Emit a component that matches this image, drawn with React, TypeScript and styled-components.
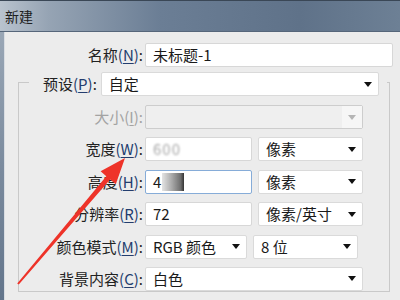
import React from 'react';
import styled, { createGlobalStyle } from 'styled-components';

const GlobalStyle = createGlobalStyle`
  html, body {
    margin: 0;
    padding: 0;
    background: #ececec;
  }
  * {
    box-sizing: border-box;
  }
`;

const Window = styled.div`
  width: 400px;
  height: 300px;
  overflow: hidden;
  display: flex;
  flex-direction: column;
  position: relative;
  font-family: "Noto Sans CJK SC", "Noto Sans", sans-serif;
  color: #1c1c1c;
`;

const TitleBar = styled.div`
  height: 32px;
  flex-shrink: 0;
  display: flex;
  align-items: center;
  padding-left: 5px;
  border-top: 1px solid #3a4756;
  border-bottom: 1px solid #56667a;
  background: linear-gradient(90deg, #b9c3ce 0%, #96a4b4 12%, #6b7e95 40%, #5f7289 75%, #6d8095 100%);
  font-size: 14px;
  line-height: 16px;
  color: #202020;
`;

const Body = styled.div`
  flex: 1;
  display: flex;
`;

const FrameEdge = styled.div`
  width: 5px;
  flex-shrink: 0;
  background: linear-gradient(180deg, #9aa7b6 0%, #7b8b9e 50%, #63758b 100%);
  border-right: 1px solid #d9dde2;
`;

const Content = styled.div`
  flex: 1;
  background: #ececec;
  padding: 11px 7px 0 13px;
`;

const Row = styled.div<{ $labelWidth: number }>`
  display: grid;
  grid-template-columns: ${({ $labelWidth }) => $labelWidth}px 1fr;
  column-gap: 2px;
  align-items: center;
  height: 24px;
`;

const Label = styled.span<{ $disabled?: boolean }>`
  text-align: right;
  font-size: 15px;
  line-height: 18px;
  white-space: nowrap;
  color: ${({ $disabled }) => ($disabled ? '#a3a3a3' : '#222')};
`;

const Key = styled.span<{ $disabled?: boolean }>`
  color: ${({ $disabled }) => ($disabled ? '#a3a3a3' : '#233d6e')};
  u {
    text-underline-offset: 2px;
  }
`;

const Fields = styled.div`
  display: flex;
  gap: 6px;
  align-items: center;
`;

const Input = styled.div<{ $w?: number; $focused?: boolean }>`
  ${({ $w }) => ($w ? `width: ${$w}px;` : 'flex: 1;')}
  height: 24px;
  background: #fff;
  border: 1px solid ${({ $focused }) => ($focused ? '#86acd8' : '#d7d7d7')};
  border-radius: 2px;
  display: flex;
  align-items: center;
  padding-left: 7px;
  font-size: 15px;
  line-height: 18px;
  color: #1a1a1a;
  white-space: nowrap;
`;

const SelectBox = styled.div<{ $w?: number; $disabled?: boolean }>`
  ${({ $w }) => ($w ? `width: ${$w}px;` : 'flex: 1;')}
  height: 24px;
  background: ${({ $disabled }) => ($disabled ? '#efefef' : '#fff')};
  border: 1px solid ${({ $disabled }) => ($disabled ? '#cdcdcd' : '#dadada')};
  border-radius: 2px;
  display: flex;
  align-items: center;
  font-size: 15px;
  line-height: 18px;
  color: #1a1a1a;
  white-space: nowrap;
`;

const SelectText = styled.span`
  flex: 1;
  padding-left: 7px;
`;

const ArrowCell = styled.span<{ $disabled?: boolean }>`
  width: 20px;
  align-self: stretch;
  display: flex;
  align-items: center;
  justify-content: center;
  background: ${({ $disabled }) => ($disabled ? '#f6f6f6' : 'transparent')};
  &::after {
    content: '';
    border-left: 4px solid transparent;
    border-right: 4px solid transparent;
    border-top: 5px solid ${({ $disabled }) => ($disabled ? '#b5b5b5' : '#111')};
  }
`;

const Group = styled.fieldset`
  margin: 1px 3px 0 0;
  padding: 9px 0 0 10px;
  border: 1px solid #c9c9c9;
  min-width: 0;
`;

const GroupLegend = styled.legend`
  padding: 4px 8px 0 14px;
  display: flex;
  align-items: center;
  gap: 4px;
`;

const GroupRows = styled.div`
  display: flex;
  flex-direction: column;
  gap: 8.4px;
`;

const Blurred = styled.span`
  color: #a8a8a8;
  filter: blur(1.3px);
  letter-spacing: 1px;
`;

const Smudge = styled.span`
  display: inline-block;
  width: 22px;
  height: 18px;
  margin-left: 1px;
  background: linear-gradient(90deg, #e4e4e4 0%, #a9a9a9 45%, #6e6e6e 85%, #333 100%);
  filter: blur(0.4px);
`;

const Overlay = styled.svg`
  position: absolute;
  left: 0;
  top: 0;
  pointer-events: none;
`;

type SelectProps = { w?: number; disabled?: boolean; children?: React.ReactNode };

const Select = ({ w, disabled, children }: SelectProps) => (
  <SelectBox $w={w} $disabled={disabled}>
    <SelectText>{children}</SelectText>
    <ArrowCell $disabled={disabled} />
  </SelectBox>
);

type FieldLabelProps = { text: string; k: string; disabled?: boolean };

const FieldLabel = ({ text, k, disabled }: FieldLabelProps) => (
  <Label $disabled={disabled}>
    {text}
    <Key $disabled={disabled}>
      (<u>{k}</u>)
    </Key>
    :
  </Label>
);

const RedArrow = () => (
  <Overlay width="400" height="300" viewBox="0 0 400 300">
    <polygon
      points="17.2,283.4 106.3,176.2 100.6,171.3 125,158 115.8,184.3 110.1,179.4 18.8,284.6"
      fill="#ee3329"
    />
  </Overlay>
);

export default function App() {
  return (
    <>
      <GlobalStyle />
      <Window>
        <TitleBar>新建</TitleBar>
        <Body>
          <FrameEdge />
          <Content>
            <Row $labelWidth={125}>
              <FieldLabel text="名称" k="N" />
              <Input>未标题-1</Input>
            </Row>
            <Group>
              <GroupLegend>
                <FieldLabel text="预设" k="P" />
                <Select w={278}>自定</Select>
              </GroupLegend>
              <GroupRows>
                <Row $labelWidth={114}>
                  <FieldLabel text="大小" k="I" disabled />
                  <Fields>
                    <Select w={218} disabled />
                  </Fields>
                </Row>
                <Row $labelWidth={114}>
                  <FieldLabel text="宽度" k="W" />
                  <Fields>
                    <Input $w={107}>
                      <Blurred>600</Blurred>
                    </Input>
                    <Select w={105}>像素</Select>
                  </Fields>
                </Row>
                <Row $labelWidth={114}>
                  <FieldLabel text="高度" k="H" />
                  <Fields>
                    <Input $w={107} $focused>
                      4<Smudge />
                    </Input>
                    <Select w={105}>像素</Select>
                  </Fields>
                </Row>
                <Row $labelWidth={114}>
                  <FieldLabel text="分辨率" k="R" />
                  <Fields>
                    <Input $w={107}>72</Input>
                    <Select w={105}>像素/英寸</Select>
                  </Fields>
                </Row>
                <Row $labelWidth={114}>
                  <FieldLabel text="颜色模式" k="M" />
                  <Fields>
                    <Select w={102}>RGB 颜色</Select>
                    <Select w={105}>8 位</Select>
                  </Fields>
                </Row>
                <Row $labelWidth={114}>
                  <FieldLabel text="背景内容" k="C" />
                  <Fields>
                    <Select w={218}>白色</Select>
                  </Fields>
                </Row>
              </GroupRows>
            </Group>
          </Content>
        </Body>
        <RedArrow />
      </Window>
    </>
  );
}
